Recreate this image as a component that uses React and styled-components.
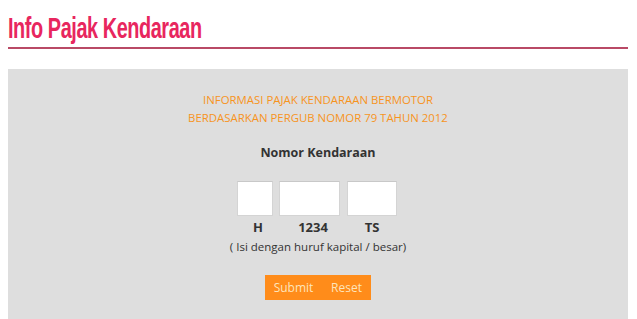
import React from "react";
import styled, { createGlobalStyle } from "styled-components";

const Global = createGlobalStyle`
  html, body { margin: 0; padding: 0; background: #fff; }
  body { font-family: "Open Sans", "DejaVu Sans", sans-serif; }
`;

const Page = styled.div`
  width: 637px;
  height: 319px;
  overflow: hidden;
  padding: 0 9px 0 8px;
  box-sizing: border-box;
`;

const Header = styled.div`
  border-bottom: 2px solid #b94a66;
  height: 49px;
  box-sizing: border-box;
  padding-top: 12px;
`;

const Title = styled.h1`
  margin: 0;
  font-family: "Liberation Sans", sans-serif;
  font-weight: 700;
  font-size: 28px;
  line-height: 34px;
  color: #e8265e;
  letter-spacing: -0.6px;
  transform: scale(0.71, 1.04);
  transform-origin: left center;
  white-space: nowrap;
  display: inline-block;
`;

const Panel = styled.div`
  margin-top: 20px;
  background: #dedede;
  height: 260px;
  display: flex;
  flex-direction: column;
  align-items: center;
  padding-top: 22px;
  box-sizing: border-box;
`;

const Notice = styled.div`
  color: #f7941d;
  font-size: 11.4px;
  line-height: 18px;
  text-align: center;
`;

const FieldTitle = styled.div`
  margin-top: 17px;
  font-size: 12.5px;
  font-weight: 700;
  color: #333;
  line-height: 18px;
`;

const Plates = styled.div`
  margin-top: 19px;
  display: flex;
  margin-left: -2px;
`;

const Plate = styled.div`
  display: flex;
  flex-direction: column;
  align-items: center;
  margin-left: ${(p) => p.$ml || 0}px;
`;

const Box = styled.input`
  width: ${(p) => p.$w}px;
  height: 35px;
  box-sizing: border-box;
  border: 1px solid #d4d4d4;
  border-top-color: #c8c8c8;
  background: #fff;
  padding: 0;
  margin: 0;
  outline: none;
`;

const Label = styled.div`
  font-size: 13px;
  font-weight: 700;
  color: #333;
  line-height: 18px;
  margin-top: 2px;
  padding-left: ${(p) => p.$shift || 0}px;
`;

const Hint = styled.div`
  font-size: 11.5px;
  color: #333;
  line-height: 18px;
  margin-top: 2px;
`;

const Buttons = styled.div`
  margin-top: 19px;
  display: flex;
  background: #ff8c1a;
`;

const Btn = styled.button`
  height: 25px;
  width: ${(p) => p.$w}px;
  border: none;
  margin: 0;
  padding: 0;
  background: #ff8c1a;
  color: #fde4bc;
  font-family: "Open Sans", sans-serif;
  font-size: 12px;
  cursor: pointer;
`;

export default function App() {
  return (
    <Page>
      <Global />
      <Header>
        <Title>Info Pajak Kendaraan</Title>
      </Header>
      <Panel>
        <Notice>
          INFORMASI PAJAK KENDARAAN BERMOTOR
          <br />
          BERDASARKAN PERGUB NOMOR 79 TAHUN 2012
        </Notice>
        <FieldTitle>Nomor Kendaraan</FieldTitle>
        <Plates>
          <Plate>
            <Box $w={36} />
            <Label $shift={6}>H</Label>
          </Plate>
          <Plate $ml={6}>
            <Box $w={61} />
            <Label $shift={7}>1234</Label>
          </Plate>
          <Plate $ml={7}>
            <Box $w={50} />
            <Label>TS</Label>
          </Plate>
        </Plates>
        <Hint>( Isi dengan huruf kapital / besar)</Hint>
        <Buttons>
          <Btn $w={57}>Submit</Btn>
          <Btn $w={49}>Reset</Btn>
        </Buttons>
      </Panel>
    </Page>
  );
}
